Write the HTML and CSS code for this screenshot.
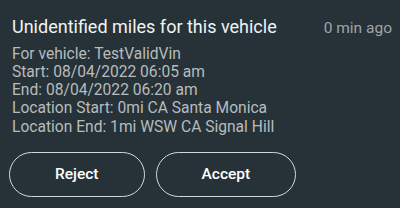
FILE: index.html
```html
<!DOCTYPE html>
<html lang="en">
<head>
    <meta charset="UTF-8">
    <meta name="viewport" content="width=device-width, initial-scale=1.0">
    <title>Unidentified miles</title>
    <link rel="stylesheet" href="styles.css">
</head>
<body>
    <div class="card">
        <div class="header">
            <h1 class="title">Unidentified miles for this vehicle</h1>
            <span class="time">0 min ago</span>
        </div>
        <div class="details">
            <div>For vehicle: TestValidVin</div>
            <div>Start: 08/04/2022 06:05 am</div>
            <div>End: 08/04/2022 06:20 am</div>
            <div>Location Start: 0mi CA Santa Monica</div>
            <div>Location End: 1mi WSW CA Signal Hill</div>
        </div>
        <div class="actions">
            <button class="btn">Reject</button>
            <button class="btn">Accept</button>
        </div>
    </div>
</body>
</html>
```

FILE: styles.css
```css
body {
    margin: 0;
    padding: 0;
    background: #263238;
    font-family: Roboto, "Noto Sans", sans-serif;
}

.card {
    padding: 15px 8px 0 12px;
}

.header {
    display: flex;
    justify-content: space-between;
    align-items: baseline;
}

.title {
    margin: 0;
    font-size: 18px;
    font-weight: 400;
    color: #f1f3f4;
    line-height: 24px;
}

.time {
    font-size: 15.5px;
    color: #9ea4a8;
}

.details {
    margin-top: 5.5px;
    font-size: 15.6px;
    line-height: 18.3px;
    color: #b7bcbf;
}

.actions {
    display: flex;
    gap: 11px;
    margin-top: 16px;
    margin-left: -3px;
}

.btn {
    height: 45px;
    padding: 0 45px;
    border: 1.5px solid #d5d8da;
    border-radius: 23px;
    background: transparent;
    color: #ffffff;
    font-family: Roboto, "Noto Sans", sans-serif;
    font-size: 15.5px;
    font-weight: 500;
}
```
